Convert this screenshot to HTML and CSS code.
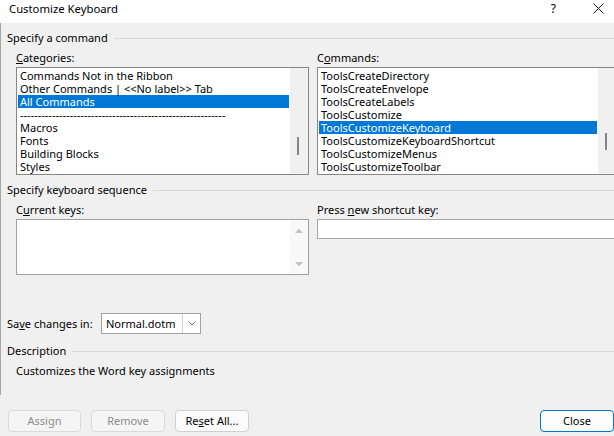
FILE: index.html
```html
<!DOCTYPE html>
<html lang="en">
<head>
<meta charset="utf-8">
<title>Customize Keyboard</title>
<link rel="stylesheet" href="styles.css">
</head>
<body>
<div class="window">
  <div class="titlebar">
    <span class="title">Customize Keyboard</span>
    <span class="help">?</span>
    <svg class="close-x" width="11" height="11" viewBox="0 0 11 11"><path d="M0.5 0.5 L10.5 10.5 M10.5 0.5 L0.5 10.5" stroke="#1b1b1b" stroke-width="1" fill="none"/></svg>
  </div>
  <div class="main">
    <div class="group"><span>Specify a command</span><span class="rule"></span></div>
    <div class="cols">
      <div class="col">
        <div class="label"><u>C</u>ategories:</div>
        <div class="listbox">
          <ul class="items">
            <li>Commands Not in the Ribbon</li>
            <li>Other Commands | &lt;&lt;No label&gt;&gt; Tab</li>
            <li class="selected">All Commands</li>
            <li>----------------------------------------------------------</li>
            <li>Macros</li>
            <li>Fonts</li>
            <li>Building Blocks</li>
            <li>Styles</li>
          </ul>
          <div class="vscroll"><div class="thumb thumb-cat"></div></div>
        </div>
      </div>
      <div class="col wide">
        <div class="label">C<u>o</u>mmands:</div>
        <div class="listbox">
          <ul class="items">
            <li>ToolsCreateDirectory</li>
            <li>ToolsCreateEnvelope</li>
            <li>ToolsCreateLabels</li>
            <li>ToolsCustomize</li>
            <li class="selected">ToolsCustomizeKeyboard</li>
            <li>ToolsCustomizeKeyboardShortcut</li>
            <li>ToolsCustomizeMenus</li>
            <li>ToolsCustomizeToolbar</li>
          </ul>
          <div class="vscroll"><div class="thumb thumb-cmd"></div></div>
        </div>
      </div>
    </div>

    <div class="group group-2"><span>Specify keyboard sequence</span><span class="rule"></span></div>
    <div class="cols">
      <div class="col">
        <div class="label">C<u>u</u>rrent keys:</div>
        <div class="keysbox">
          <div class="keyslist"></div>
          <div class="keyscroll">
            <svg width="8" height="5" viewBox="0 0 8 5"><path d="M0 5 L4 0.5 L8 5 Z" fill="#c4c4c4"/></svg>
            <svg width="8" height="5" viewBox="0 0 8 5"><path d="M0 0 L4 4.5 L8 0 Z" fill="#c4c4c4"/></svg>
          </div>
        </div>
      </div>
      <div class="col wide">
        <div class="label">Press <u>n</u>ew shortcut key:</div>
        <div class="shortcut"></div>
      </div>
    </div>

    <div class="save-row">
      <span class="save-label">Sa<u>v</u>e changes in:</span>
      <div class="select">
        <span class="value">Normal.dotm</span>
        <span class="dd-btn"><svg width="8" height="5" viewBox="0 0 8 5"><path d="M0.5 0.5 L4 4 L7.5 0.5" stroke="#6b6b6b" stroke-width="1" fill="none"/></svg></span>
      </div>
    </div>

    <div class="group group-3"><span>Description</span><span class="rule"></span></div>
    <div class="desc">Customizes the Word key assignments</div>
  </div>
  <div class="footer">
    <span class="btn disabled btn-assign">Assign</span>
    <span class="btn disabled btn-remove">Remove</span>
    <span class="btn btn-reset">Re<u>s</u>et All...</span>
    <span class="btn primary btn-close">Close</span>
  </div>
</div>
</body>
</html>
```

FILE: styles.css
```css
html, body {
  margin: 0;
  padding: 0;
}
body {
  background: #f0f0f0;
  font-family: "Noto Sans", "Segoe UI", sans-serif;
  font-size: 11px;
  line-height: 16px;
  color: #000;
  overflow: hidden;
}
.window {
  width: 614px;
  height: 436px;
  overflow: hidden;
  background: #f0f0f0;
}
.titlebar {
  height: 23px;
  background: #fff;
  display: flex;
  align-items: flex-start;
}
.title {
  flex: 1;
  padding: 1px 0 0 9px;
  font-size: 11.3px;
}
.help {
  margin-top: 1px;
  font-size: 12px;
}
.close-x {
  margin: 3px 10px 0 37px;
}
.main {
  border-left: 1px solid #a6a6a6;
  padding: 7px 0 16px 0;
}
.group {
  display: flex;
  align-items: center;
  height: 16px;
  padding-left: 6px;
  white-space: nowrap;
}
.group .rule {
  flex: 1;
  border-top: 1px solid #d9d9d9;
  margin-left: 6px;
}
.group-2 {
  margin-top: 7px;
}
.group-3 {
  margin-top: 9px;
}
.cols {
  display: flex;
  gap: 8px;
  padding-left: 15px;
  margin-top: 4px;
}
.col {
  width: 293px;
  flex: none;
}
.col.wide {
  width: 300px;
}
.label {
  height: 16px;
  margin-bottom: 1px;
  white-space: nowrap;
}
.listbox {
  display: flex;
  height: 108px;
  box-sizing: border-box;
  border: 1px solid #868686;
  background: #fff;
}
.items {
  flex: 1;
  min-width: 0;
  margin: 0;
  padding: 1px 0 0;
  list-style: none;
}
.items li {
  height: 13px;
  line-height: 13px;
  padding-left: 2px;
  margin: 0 1px;
  white-space: nowrap;
}
.items li.selected {
  background: #0078d7;
  color: #fff;
}
.vscroll {
  width: 18px;
  flex: none;
  background: #f0f0f0;
}
.thumb {
  width: 2px;
  margin-left: 7px;
  background: #858585;
}
.thumb-cat {
  margin-top: 69px;
  height: 18px;
}
.thumb-cmd {
  margin-top: 65px;
  height: 17px;
}
.keysbox {
  display: flex;
  height: 56px;
  box-sizing: border-box;
  border: 1px solid #a0a0a0;
  background: #fff;
}
.keyslist {
  flex: 1;
}
.keyscroll {
  width: 18px;
  flex: none;
  background: #f9f9f9;
  display: flex;
  flex-direction: column;
  justify-content: space-between;
  align-items: center;
  padding: 8px 0 7px;
  box-sizing: border-box;
}
.shortcut {
  height: 20px;
  box-sizing: border-box;
  border: 1px solid #a8a8a8;
  background: #fff;
}
.save-row {
  display: flex;
  align-items: center;
  margin-top: 38px;
  padding-left: 6px;
}
.save-label {
  width: 94px;
  flex: none;
}
.select {
  display: flex;
  width: 100px;
  height: 21px;
  box-sizing: border-box;
  border: 1px solid #a2a2a2;
  background: #fff;
}
.select .value {
  flex: 1;
  padding-left: 4px;
  line-height: 19px;
}
.dd-btn {
  width: 18px;
  box-sizing: border-box;
  border-left: 1px solid #d2d2d2;
  display: flex;
  align-items: center;
  justify-content: center;
}
.desc {
  margin-top: 4px;
  padding-left: 15px;
}
.footer {
  display: flex;
  gap: 10px;
  padding: 15px 0 0 8px;
}
.btn {
  height: 22px;
  box-sizing: border-box;
  border: 1px solid #d0d0d0;
  border-radius: 4px;
  background: #fbfbfb;
  display: flex;
  align-items: center;
  justify-content: center;
}
.btn.disabled {
  background: #f5f5f5;
  border-color: #dadada;
  color: #8c8c8c;
}
.btn.primary {
  border-color: #0078d4;
  background: #fdfdfd;
}
.btn-assign { width: 73px; }
.btn-remove { width: 74px; }
.btn-reset { width: 74px; }
.btn-close {
  width: 74px;
  margin-left: auto;
}
```
